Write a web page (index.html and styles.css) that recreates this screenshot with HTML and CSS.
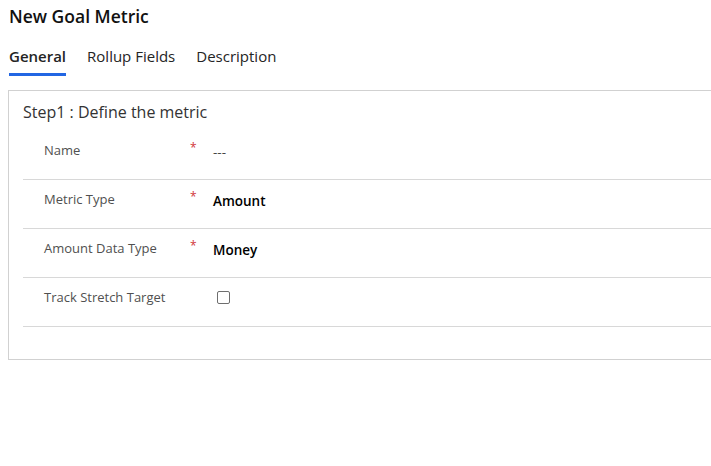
FILE: index.html
```html
<!DOCTYPE html>
<html lang="en">
<head>
<meta charset="utf-8">
<title>New Goal Metric</title>
<link rel="stylesheet" href="styles.css">
</head>
<body>
<div class="page">
  <h1 class="title">New Goal Metric</h1>
  <nav class="tabs">
    <span class="tab active">General</span>
    <span class="tab">Rollup Fields</span>
    <span class="tab">Description</span>
  </nav>
  <section class="panel">
    <h2 class="step">Step1 : Define the metric</h2>
    <div class="rows">
      <div class="row">
        <span class="label">Name</span>
        <span class="req">*</span>
        <span class="value muted">---</span>
      </div>
      <div class="row">
        <span class="label">Metric Type</span>
        <span class="req">*</span>
        <span class="value">Amount</span>
      </div>
      <div class="row">
        <span class="label">Amount Data Type</span>
        <span class="req">*</span>
        <span class="value">Money</span>
      </div>
      <div class="row">
        <span class="label">Track Stretch Target</span>
        <span class="req"></span>
        <span class="value"><span class="checkbox"></span></span>
      </div>
    </div>
  </section>
</div>
</body>
</html>
```
FILE: styles.css
```css
html, body {
  margin: 0;
  padding: 0;
  overflow: hidden;
  background: #fff;
}
body {
  font-family: "Open Sans", "Noto Sans", "Liberation Sans", sans-serif;
  color: #242424;
}
.page {
  padding: 0 0 0 8px;
}
.title {
  margin: 0;
  padding: 3px 0 0 1px;
  font-size: 17.5px;
  font-weight: 600;
  line-height: 26px;
  color: #111;
}
.tabs {
  display: flex;
  gap: 21px;
  margin-top: 17px;
  padding-left: 1px;
}
.tab {
  font-size: 15px;
  line-height: 20px;
  padding-bottom: 7px;
  border-bottom: 3px solid transparent;
  color: #242424;
}
.tab.active {
  border-bottom-color: #2266e3;
  font-weight: 600;
}
.panel {
  margin-top: 14px;
  margin-right: -60px;
  border: 1px solid #d1d1d1;
  padding: 0 0 32px 14px;
}
.step {
  margin: 0;
  padding-top: 10px;
  font-size: 16px;
  font-weight: 400;
  line-height: 22px;
  color: #333;
}
.rows {
  margin-top: 8px;
}
.row {
  display: flex;
  align-items: flex-start;
  height: 48px;
  border-bottom: 1px solid #d8d8d8;
  padding-left: 21px;
  font-size: 13px;
}
.label {
  width: 146px;
  padding-top: 9px;
  line-height: 20px;
  color: #505050;
}
.req {
  width: 23px;
  padding-top: 7px;
  line-height: 20px;
  color: #d13438;
  font-size: 12px;
}
.value {
  padding-top: 11px;
  line-height: 20px;
  color: #000;
  font-weight: 600;
  font-size: 13.5px;
}
.value.muted {
  font-weight: 400;
  color: #444;
}
.checkbox {
  display: block;
  margin: 2px 0 0 4px;
  width: 11px;
  height: 11px;
  border: 1px solid #6e6e6e;
  border-radius: 2px;
}
```
